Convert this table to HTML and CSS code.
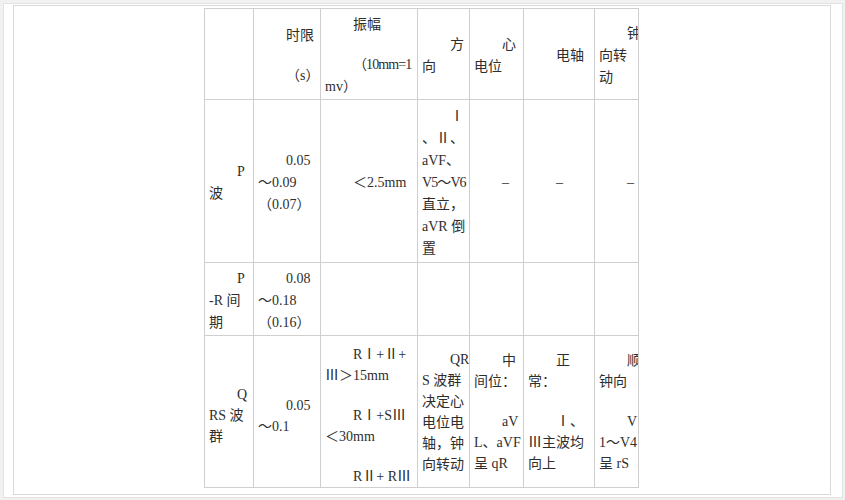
FILE: index.html
```html
<!DOCTYPE html>
<html lang="zh-CN">
<head>
<meta charset="utf-8">
<title>心电图波形正常值</title>
<link rel="stylesheet" href="styles.css">
</head>
<body>
<div class="frame">
  <div class="inner">
    <table class="ecg">
      <colgroup>
        <col class="w1"><col class="w2"><col class="w3"><col class="w4"><col class="w5"><col class="w6"><col class="w7">
      </colgroup>
      <tr class="r-head">
        <td></td>
        <td><p>时限</p><p>（s）</p></td>
        <td><p>振幅</p><p><span class="nar">（10mm=1</span><br>mv）</p></td>
        <td><p>方<br>向</p></td>
        <td><p>心<br>电位</p></td>
        <td><p>电轴</p></td>
        <td class="clip"><p>钟<br>向转<br>动</p></td>
      </tr>
      <tr class="r-p">
        <td><p>P<br>波</p></td>
        <td><p>0.05<br>～0.09<br>（0.07）</p></td>
        <td><p>＜2.5mm</p></td>
        <td><p>Ⅰ<br>、Ⅱ、<br>aVF、<br><span class="nar">V5～V6</span><br>直立，<br>aVR 倒<br>置</p></td>
        <td><p>–</p></td>
        <td><p>–</p></td>
        <td class="clip"><p>–</p></td>
      </tr>
      <tr class="r-pr">
        <td><p>P<br>-R 间<br>期</p></td>
        <td><p>0.08<br>～0.18<br>（0.16）</p></td>
        <td></td>
        <td></td>
        <td></td>
        <td></td>
        <td class="clip"></td>
      </tr>
      <tr class="r-qrs">
        <td class="lo"><p>Q<br>RS 波<br>群</p></td>
        <td class="lo"><p>0.05<br>～0.1</p></td>
        <td class="lo"><p>RⅠ+Ⅱ+<br>Ⅲ＞15mm</p><p>RⅠ+SⅢ<br>＜30mm</p><p>RⅡ+ RⅢ</p></td>
        <td><p>QR<br>S 波群<br>决定心<br>电位电<br>轴，钟<br>向转动</p></td>
        <td><p>中<br>间位：</p><p>aV<br>L、aVF<br>呈 qR</p></td>
        <td><p>正<br>常：</p><p>Ⅰ、<br>Ⅲ主波均<br>向上</p></td>
        <td class="clip"><p>顺<br>钟向</p><p>V<br>1～V4<br>呈 rS</p></td>
      </tr>
    </table>
  </div>
</div>
</body>
</html>
```
FILE: styles.css
```css
html, body {
  margin: 0;
  padding: 0;
}

body {
  width: 845px;
  height: 500px;
  overflow: hidden;
  background: #f1f1f1;
  font-family: "Liberation Serif", "Noto Sans CJK SC", serif;
  color: #2e2e2e;
}

.frame {
  box-sizing: border-box;
  margin: 3px 2px 0 3px;
  height: 495px;
  padding: 1px 11px 2px 9px;
  background: #ffffff;
  border: 1px solid #e2e2e2;
}

.inner {
  box-sizing: border-box;
  height: 490px;
  padding: 2px 0 0 190px;
  border: 1px solid #d9d9d9;
}

.ecg {
  border-collapse: collapse;
  table-layout: fixed;
  width: 435px;
}

.w1 { width: 49px; }
.w2 { width: 67px; }
.w3 { width: 97px; }
.w4 { width: 52px; }
.w5 { width: 54px; }
.w6 { width: 71px; }
.w7 { width: 44px; }

.ecg td {
  border: 1px solid #cfcfcf;
  padding: 4px 4px 0 4px;
  vertical-align: middle;
  font-size: 14px;
  line-height: 22px;
  overflow: hidden;
}

.ecg p {
  margin: 0;
  text-indent: 2em;
  white-space: nowrap;
}

.ecg p + p {
  margin-top: 18px;
}

.nar {
  letter-spacing: -0.9px;
}

.r-head { height: 91px; }
.r-p { height: 163px; }
.r-pr { height: 73px; }
.r-qrs { height: 152px; }

.r-qrs td {
  line-height: 21px;
  padding-top: 0;
}

.r-qrs td.lo {
  padding-top: 8px;
}

.r-qrs p + p {
  margin-top: 19px;
}
```
